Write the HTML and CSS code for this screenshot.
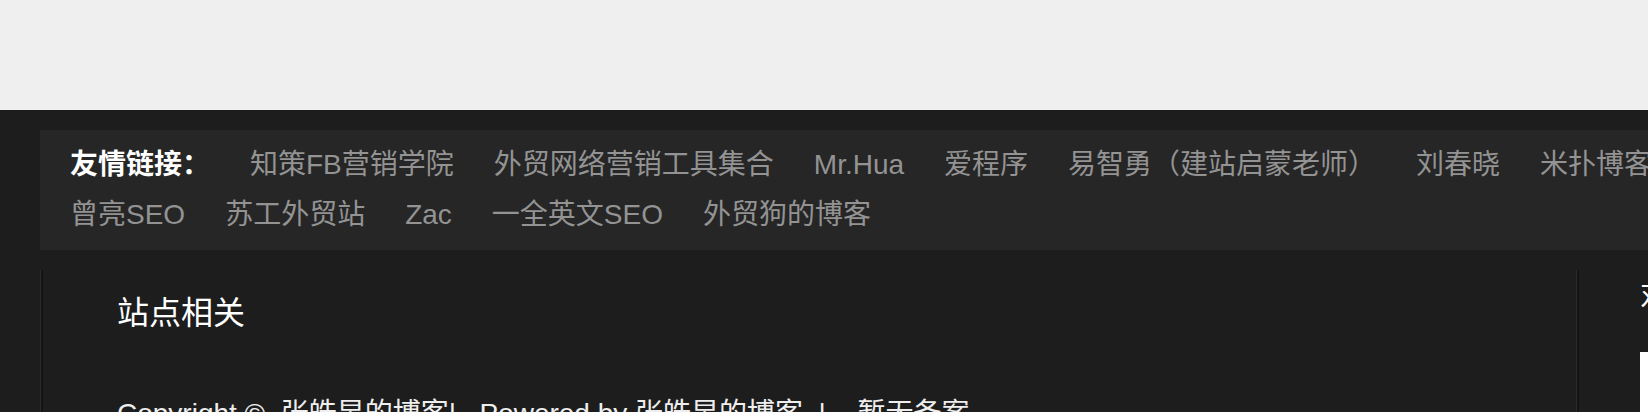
FILE: index.html
```html
<!DOCTYPE html>
<html lang="zh-CN">
<head>
    <meta charset="UTF-8">
    <title>张皓昱的博客</title>
    <link rel="stylesheet" href="styles.css">
</head>
<body>
    <div class="page-top"></div>
    <div class="footer">
        <!-- 友情链接 -->
        <div class="friend-links">
            <span class="fl-title">友情链接：</span>
            <a href="#">知策FB营销学院</a>
            <a href="#">外贸网络营销工具集合</a>
            <a href="#">Mr.Hua</a>
            <a href="#">爱程序</a>
            <a href="#">易智勇（建站启蒙老师）</a>
            <a href="#">刘春晓</a>
            <a href="#">米扑博客</a>
            <a href="#">曾亮SEO</a>
            <a href="#">苏工外贸站</a>
            <a href="#">Zac</a>
            <a href="#">一全英文SEO</a>
            <a href="#">外贸狗的博客</a>
        </div>

        <div class="footer-cols">
            <div class="col-main">
                <div class="col-inner">
                    <h3 class="col-title">站点相关</h3>
                    <p class="copyright">Copyright ©&nbsp;&nbsp;张皓昱的博客|&nbsp;&nbsp;&nbsp;Powered by 张皓昱的博客&nbsp;&nbsp;|&nbsp;&nbsp;<a class="beian" href="#">暂无备案</a></p>
                </div>
            </div>
            <div class="col-side">
                <h3 class="side-title">对话</h3>
                <div class="qrcode"></div>
            </div>
        </div>
    </div>
</body>
</html>
```

FILE: styles.css
```css
body{
    margin: 0;
    background-color: #1d1d1d;
    font-family: "Liberation Sans", "Noto Sans CJK SC", sans-serif;
    overflow: hidden;
}
.page-top{
    height: 110px;
    background-color: #efefef;
}
.footer{
    background-color: #1d1d1d;
    padding-top: 20px;
    overflow: hidden;
}
.friend-links{
    width: 1760px;
    box-sizing: border-box;
    margin-left: 40px;
    padding: 10px 30px;
    background-color: #262626;
    display: flex;
    flex-wrap: wrap;
    column-gap: 40px;
    font-size: 28px;
    line-height: 50px;
}
.fl-title{
    color: #ffffff;
    font-weight: bold;
}
.friend-links a{
    color: #939393;
    text-decoration: none;
    white-space: nowrap;
}

.footer-cols{
    display: flex;
    margin-left: 40px;
    margin-top: 20px;
}
.col-main{
    flex-shrink: 0;
    width: 1539px;
    box-sizing: border-box;
    border-left: 1px solid #2b2b2b;
    border-right: 2px solid #141414;
}
.col-inner{
    border-left: 2px solid #141414;
    border-right: 1px solid #2b2b2b;
    padding: 23px 0 40px 74px;
}
.col-title{
    margin: 0;
    color: #ffffff;
    font-size: 32px;
    font-weight: normal;
    line-height: 40px;
}
.copyright{
    margin: 56px 0 0;
    color: #eeeeee;
    font-size: 28px;
    line-height: 50px;
    white-space: nowrap;
}
.beian{
    color: #eeeeee;
    text-decoration: none;
    margin-left: 16px;
}

.col-side{
    flex-shrink: 0;
    width: 400px;
    padding: 6px 0 0 61px;
}
.side-title{
    margin: 0;
    color: #ffffff;
    font-size: 28px;
    font-weight: normal;
    line-height: 40px;
}
.qrcode{
    margin-top: 36px;
    width: 200px;
    height: 200px;
    background-color: #ffffff;
}
```
